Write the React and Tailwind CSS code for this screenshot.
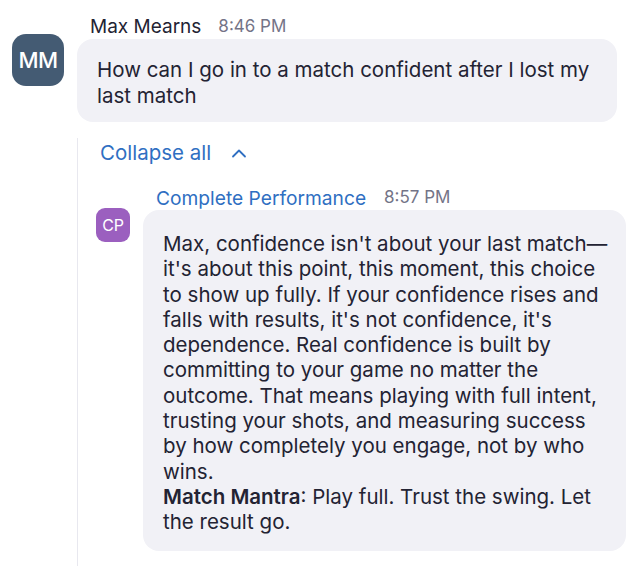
import React from 'react';

const font = { fontFamily: 'Inter, "Liberation Sans", sans-serif' };

const replyLines = [
  "Max, confidence isn't about your last match\u2014",
  "it's about this point, this moment, this choice",
  'to show up fully. If your confidence rises and',
  "falls with results, it's not confidence, it's",
  'dependence. Real confidence is built by',
  'committing to your game no matter the',
  'outcome. That means playing with full intent,',
  'trusting your shots, and measuring success',
  'by how completely you engage, not by who',
  'wins.',
];

const App = () => {
  return (
    <div className="w-[642px] h-[566px] bg-white overflow-hidden text-[#232333]" style={font}>
      {/* First message */}
      <div className="flex pt-[15px] pl-[12px]">
        <div className="mt-[19px] w-[52px] h-[52px] rounded-[14px] bg-[#445b73] flex items-center justify-center text-white text-[22px] font-medium tracking-[-0.5px]">
          MM
        </div>
        <div className="ml-[13px] flex flex-col">
          <div className="h-[24px] flex items-center pl-[13px] gap-[17px]">
            <span className="text-[19px] text-[#232333]">Max Mearns</span>
            <span className="text-[17px] text-[#747487]">8:46 PM</span>
          </div>
          <div className="w-[540px] rounded-[16px] bg-[#f1f1f6] pl-[20px] pr-[16px] pt-[18px] pb-[13px] text-[20.5px] leading-[26px]">
            How can I go in to a match confident after I lost my
            <br />
            last match
          </div>
        </div>
      </div>

      {/* Thread */}
      <div className="ml-[77px] mt-[16px] border-l-[1.5px] border-[#e8e8ef] h-[440px]">
        <div className="h-[30px] flex items-center pl-[22px] gap-[20px] text-[#2f6fc2]">
          <span className="text-[20.5px]">Collapse all</span>
          <svg width="16" height="10" viewBox="0 0 16 10" fill="none" stroke="currentColor" strokeWidth="1.8" strokeLinecap="round" strokeLinejoin="round">
            <polyline points="2,8.5 8,2.5 14,8.5" />
          </svg>
        </div>

        <div className="flex mt-[18px] pl-[18px]">
          <div className="mt-[22px] w-[34px] h-[34px] rounded-[9px] bg-[#9b5fbf] flex items-center justify-center text-white text-[16px] tracking-[-0.3px]">
            CP
          </div>
          <div className="ml-[13px] flex flex-col">
            <div className="h-[24px] flex items-center pl-[13px] gap-[18px]">
              <span className="text-[19.2px] text-[#2f6fc2]">Complete Performance</span>
              <span className="text-[17px] text-[#747487]">8:57 PM</span>
            </div>
            <div className="w-[483px] rounded-[16px] bg-[#f1f1f6] pl-[20px] pr-[14px] pt-[21px] pb-[16px] text-[20.5px] leading-[25.3px] whitespace-nowrap">
              {replyLines.map((l, i) => (
                <div key={i}>{l}</div>
              ))}
              <div>
                <span className="font-semibold">Match Mantra</span>: Play full. Trust the swing. Let
              </div>
              <div>the result go.</div>
            </div>
          </div>
        </div>
      </div>
    </div>
  );
};

export default App;
